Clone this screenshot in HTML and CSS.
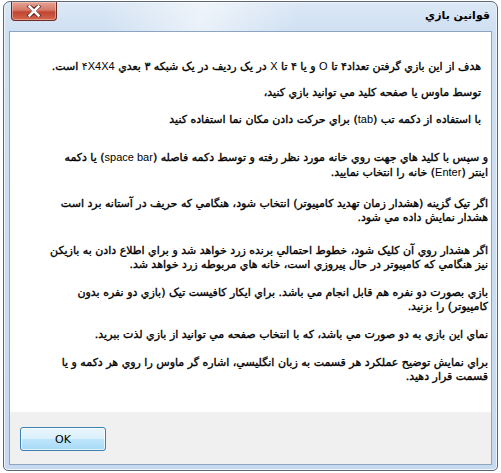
FILE: index.html
```html
<!DOCTYPE html>
<html lang="fa" dir="rtl">
<head>
<meta charset="utf-8">
<title>قوانين بازي</title>
<link rel="stylesheet" href="styles.css">
</head>
<body>
<div class="window">
  <div class="titlebar">
    <div class="title">قوانين بازي</div>
    <div class="close" aria-label="close">
      <svg width="16" height="12" viewBox="0 0 16 12" aria-hidden="true">
        <path d="M3.5 1.5 L8 5 L12.5 1.5 M3.5 10.5 L8 7 L12.5 10.5" fill="none" stroke="#5a1a14" stroke-width="4" stroke-linecap="square"/>
        <path d="M3.5 1.5 L12.5 10.5 M12.5 1.5 L3.5 10.5" fill="none" stroke="#ffffff" stroke-width="2.6" stroke-linecap="square"/>
      </svg>
    </div>
  </div>
  <div class="client">
    <div class="content">
      <p class="para short tight">هدف از اين بازي گرفتن تعداد۴ تا <span class="latin">O</span> و يا ۴ تا <span class="latin">X</span> در يک رديف در يک شبکه ۳ بعدي <span class="latin">۴X4X4</span> است.</p>
      <p class="para short tight">توسط ماوس يا صفحه كليد مي توانيد بازي كنيد،</p>
      <p class="para short wide-gap">با استفاده از دكمه تب (<span class="latin">tab</span>) براي حركت دادن مكان نما استفاده كنيد</p>
      <p class="para loose">و سپس با كليد هاي جهت روي خانه مورد نظر رفته و توسط دكمه فاصله (<span class="latin">space bar</span>) يا دكمه<br>اينتر (<span class="latin">Enter</span>) خانه را انتخاب نماييد.</p>
      <p class="para mid-gap">اگر تيک گزينه (هشدار زمان تهديد كامپيوتر) انتخاب شود، هنگامي كه حريف در آستانه برد است<br>هشدار نمايش داده مي شود.</p>
      <p class="para">اگر هشدار روي آن كليک شود، خطوط احتمالي برنده زرد خواهد شد و براي اطلاع دادن به بازيكن<br>نيز هنگامي كه كامپيوتر در حال پيروزي است، خانه هاي مربوطه زرد خواهد شد.</p>
      <p class="para">بازي بصورت دو نفره هم قابل انجام مي باشد. براي ايكار كافيست تيک (بازي دو نفره بدون<br>كامپيوتر) را بزنيد.</p>
      <p class="para">نماي اين بازي به دو صورت مي باشد، كه با انتخاب صفحه مي توانيد از بازي لذت ببريد.</p>
      <p class="para">براي نمايش توضيح عملكرد هر قسمت به زبان انگليسي، اشاره گر ماوس را روي هر دكمه و يا<br>قسمت قرار دهيد.</p>
    </div>
    <div class="footer">
      <button class="ok" type="button">OK</button>
    </div>
  </div>
</div>
</body>
</html>
```

FILE: styles.css
```css
html, body {
  margin: 0;
  padding: 0;
  background: #ffffff;
}

body {
  width: 501px;
  height: 473px;
  overflow: hidden;
  font-family: "DejaVu Sans", sans-serif;
}

.window {
  box-sizing: border-box;
  margin: 1px 3px 0 3px;
  height: 470px;
  border: 1px solid #5c6676;
  border-radius: 7px 7px 5px 5px;
  background: linear-gradient(to bottom, #dce8f5 0px, #cfe0f2 30px, #c6d9ee 100%);
  box-shadow: inset 0 0 0 1px #eef4fb;
  padding: 0 5px 5px 5px;
  display: flex;
  flex-direction: column;
}

.titlebar {
  height: 29px;
  display: flex;
  justify-content: space-between;
  align-items: flex-start;
  background: linear-gradient(100deg, rgba(255,255,255,0) 20%, rgba(255,255,255,0.55) 40%, rgba(255,255,255,0) 60%);
}

.title {
  margin-top: 7px;
  margin-right: 2px;
  font-family: "DejaVu Sans", sans-serif;
  font-weight: bold;
  font-size: 11px;
  color: #000;
}

.close {
  width: 46px;
  height: 19px;
  box-sizing: border-box;
  margin-left: 2px;
  border: 1px solid #6b2a22;
  border-top: none;
  border-radius: 0 0 4px 4px;
  background: linear-gradient(to bottom, #e6a294 0%, #d47a69 45%, #c24530 55%, #d2664d 100%);
  display: flex;
  align-items: center;
  justify-content: center;
  box-shadow: inset 0 0 0 1px rgba(255,220,210,0.45);
}

.client {
  flex: 1;
  border: 1px solid #8ea5c2;
  background: #ffffff;
  display: flex;
  flex-direction: column;
}

.content {
  flex: 1;
  padding: 27px 3px 0 0;
}

.para {
  margin: 0 0 14px 0;
  font-size: 11px;
  line-height: 14px;
  color: #000;
  white-space: nowrap;
  -webkit-text-stroke: 0.35px #000;
}

.latin {
  font-family: "Liberation Sans", "DejaVu Sans", sans-serif;
  font-size: 11px;
  -webkit-text-stroke: 0;
}

.para.short {
  padding-right: 7px;
}

.para.tight {
  margin-bottom: 12px;
}

.para.wide-gap {
  margin-bottom: 23px;
}

.para.loose {
  margin-bottom: 17px;
}

.para.mid-gap {
  margin-bottom: 19px;
}

.footer {
  height: 52px;
  background: #f0f0f0;
  display: flex;
  align-items: flex-start;
  justify-content: flex-end;
  padding: 15px 10px 0 10px;
  box-sizing: border-box;
}

.ok {
  width: 86px;
  height: 24px;
  border: 1px solid #3c7fb1;
  border-radius: 3px;
  background: linear-gradient(to bottom, #eaf6fd 0%, #d9f0fc 50%, #bee6fd 51%, #a7d9f5 100%);
  box-shadow: inset 0 0 0 1px rgba(255,255,255,0.7);
  font-family: "DejaVu Sans", sans-serif;
  font-size: 11px;
  color: #000;
  padding: 0;
}
```
